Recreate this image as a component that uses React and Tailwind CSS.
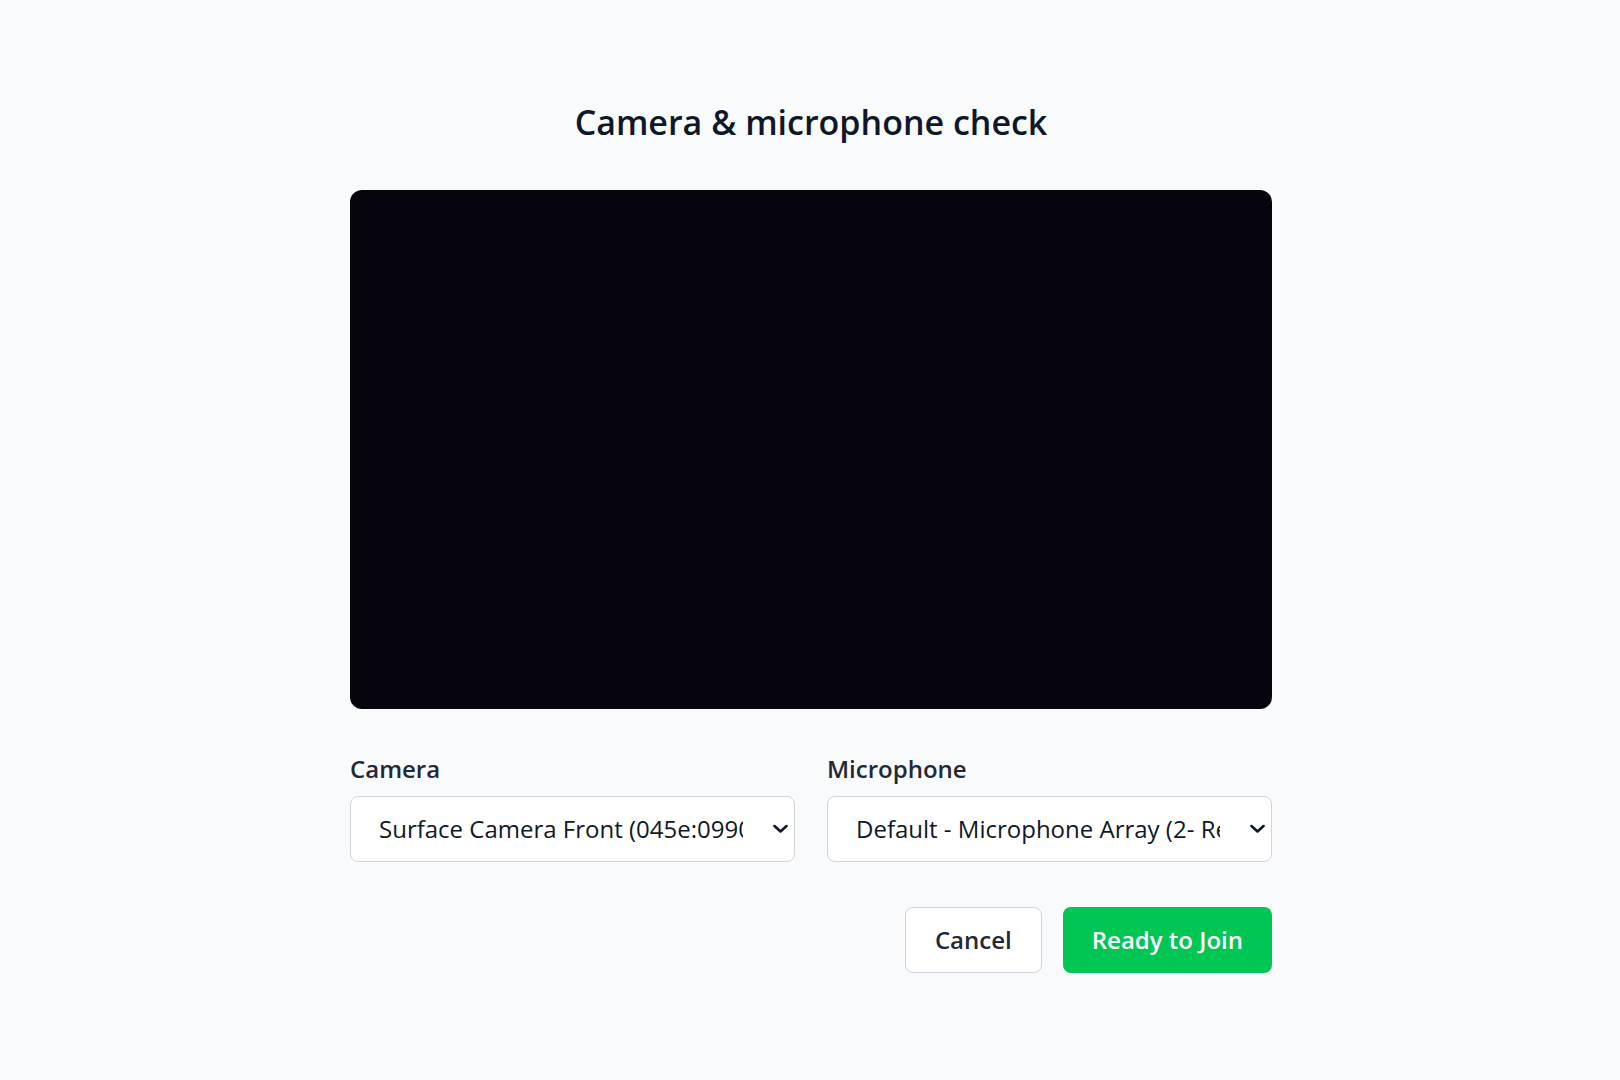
import { useState } from 'react';

const cameras = ['Surface Camera Front (045e:0990)', 'Surface Camera Rear (045e:0991)'];
const mics = ['Default - Microphone Array (2- Realtek(R) Audio)', 'Microphone Array (2- Realtek(R) Audio)'];

function DeviceSelect({ label, value, options, onChange }) {
  return (
    <div className="flex flex-col gap-[11px]">
      <label className="text-[24px] leading-[32px] font-semibold text-[#1f2937]">{label}</label>
      <div className="relative">
        <select
          value={value}
          onChange={(e) => onChange(e.target.value)}
          className="appearance-none w-full h-[66px] pl-[28px] pr-[51px] bg-white border border-[#d1d5db] rounded-lg text-[24px] text-[#111827] outline-none"
        >
          {options.map((o) => (
            <option key={o} value={o}>{o}</option>
          ))}
        </select>
        <svg
          className="pointer-events-none absolute right-[7px] top-1/2 -translate-y-1/2 w-[15px] h-[9px]"
          viewBox="0 0 15 9"
          fill="none"
        >
          <path d="M1.5 1.5 L7.5 7 L13.5 1.5" stroke="#111827" strokeWidth="2.6" strokeLinecap="round" strokeLinejoin="round" />
        </svg>
      </div>
    </div>
  );
}

export default function App() {
  const [camera, setCamera] = useState(cameras[0]);
  const [mic, setMic] = useState(mics[0]);

  return (
    <div className="min-h-screen bg-[#f9fafb] flex flex-col items-center pt-[102px] pl-[2px]" style={{ fontFamily: '"Open Sans", "Noto Sans", sans-serif' }}>
      <h1 className="text-[34px] leading-[40px] font-semibold text-[#0f172a]">Camera &amp; microphone check</h1>

      <div className="w-[922px] mt-[48px] flex flex-col">
        <div className="w-full aspect-video rounded-xl bg-[#06050d]" />

        <div className="grid grid-cols-2 gap-[32px] mt-[44px]">
          <DeviceSelect label="Camera" value={camera} options={cameras} onChange={setCamera} />
          <DeviceSelect label="Microphone" value={mic} options={mics} onChange={setMic} />
        </div>

        <div className="flex justify-end gap-[21px] mt-[45px]">
          <button className="h-[66px] px-[29px] bg-white border border-[#d1d5db] rounded-lg text-[24px] font-semibold text-[#1f2937]">
            Cancel
          </button>
          <button className="h-[66px] px-[29px] bg-[#00c653] rounded-lg text-[24px] font-semibold text-white">
            Ready to Join
          </button>
        </div>
      </div>
    </div>
  );
}
